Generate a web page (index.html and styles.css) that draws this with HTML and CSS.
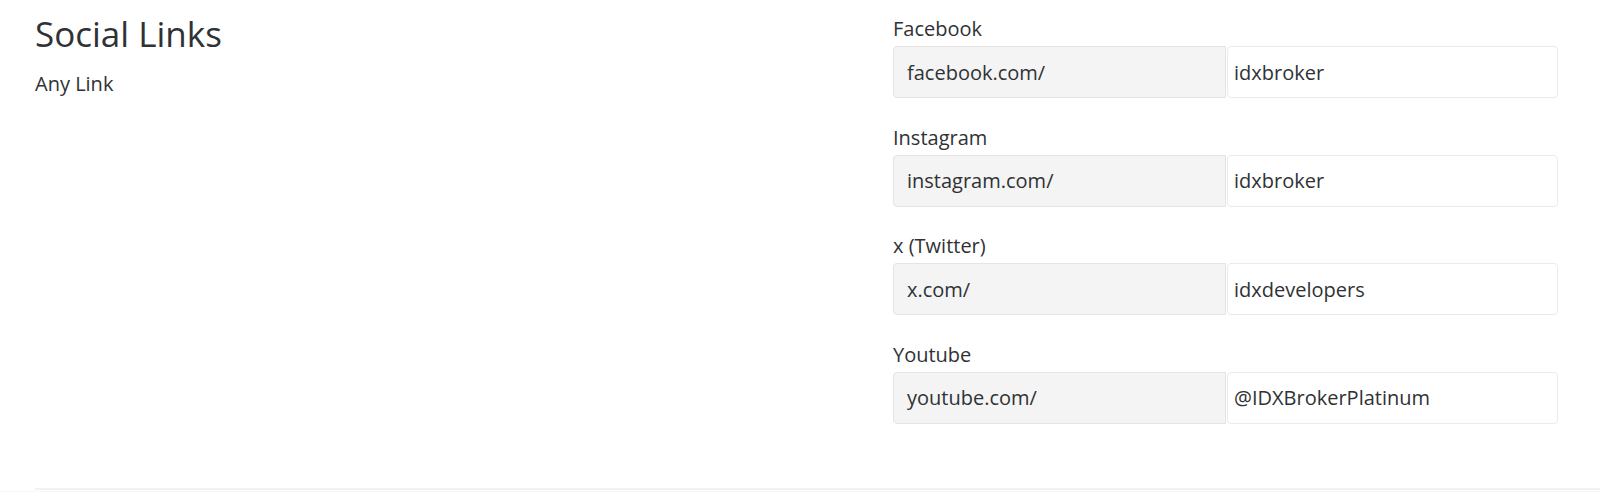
FILE: index.html
```html
<!DOCTYPE html>
<html lang="en">
<head>
  <meta charset="UTF-8" />
  <meta name="viewport" content="width=device-width, initial-scale=1.0"/>
  <title>Social Links</title>
  <link rel="stylesheet" href="styles.css">
</head>
<body>
  <div class="section">
    <div class="intro">
      <h2>Social Links</h2>
      <p>Any Link</p>
    </div>

    <div class="fields">
      <div class="field">
        <label for="facebook">Facebook</label>
        <div class="input-group">
          <span class="prefix">facebook.com/</span>
          <input type="text" id="facebook" value="idxbroker" />
        </div>
      </div>

      <div class="field">
        <label for="instagram">Instagram</label>
        <div class="input-group">
          <span class="prefix">instagram.com/</span>
          <input type="text" id="instagram" value="idxbroker" />
        </div>
      </div>

      <div class="field">
        <label for="twitter">x (Twitter)</label>
        <div class="input-group">
          <span class="prefix">x.com/</span>
          <input type="text" id="twitter" value="idxdevelopers" />
        </div>
      </div>

      <div class="field">
        <label for="youtube">Youtube</label>
        <div class="input-group">
          <span class="prefix">youtube.com/</span>
          <input type="text" id="youtube" value="@IDXBrokerPlatinum" />
        </div>
      </div>
    </div>
  </div>
  <div class="page-edge"></div>
</body>
</html>
```

FILE: styles.css
```css
body {
  font-family: "Open Sans", Lato, sans-serif;
  background: #fff;
  color: #2f3235;
  margin: 0;
  padding: 0;
}

.section {
  display: flex;
  margin-left: 35px;
  padding: 12px 42px 64px 0;
  border-bottom: 2px solid #f2f2f2;
}

.intro {
  flex: 1;
}

.intro h2 {
  font-size: 35px;
  font-weight: 400;
  margin: 0;
  line-height: 44px;
}

.intro p {
  font-size: 20px;
  line-height: 28px;
  margin: 14px 0 0;
}

.fields {
  width: 665px;
  margin-top: 3px;
}

.field {
  margin-bottom: 25.67px;
}

.field:last-child {
  margin-bottom: 0;
}

.field label {
  display: block;
  font-size: 20px;
  line-height: 28px;
  margin-bottom: 3px;
}

.input-group {
  display: flex;
  height: 52px;
}

.prefix {
  display: flex;
  align-items: center;
  box-sizing: border-box;
  width: 333px;
  padding-left: 13px;
  background: #f4f4f4;
  border: 1px solid #e4e4e4;
  border-radius: 4px 0 0 4px;
  font-size: 20px;
}

.input-group input {
  flex: 1;
  box-sizing: border-box;
  margin-left: 1px;
  padding: 0 6px;
  border: 1px solid #ebebeb;
  border-radius: 4px;
  font-family: inherit;
  font-size: 20px;
  color: #2f3235;
  background: #fff;
}

.page-edge {
  height: 2px;
  margin-top: 1px;
  background: #f7f7f7;
}
```
